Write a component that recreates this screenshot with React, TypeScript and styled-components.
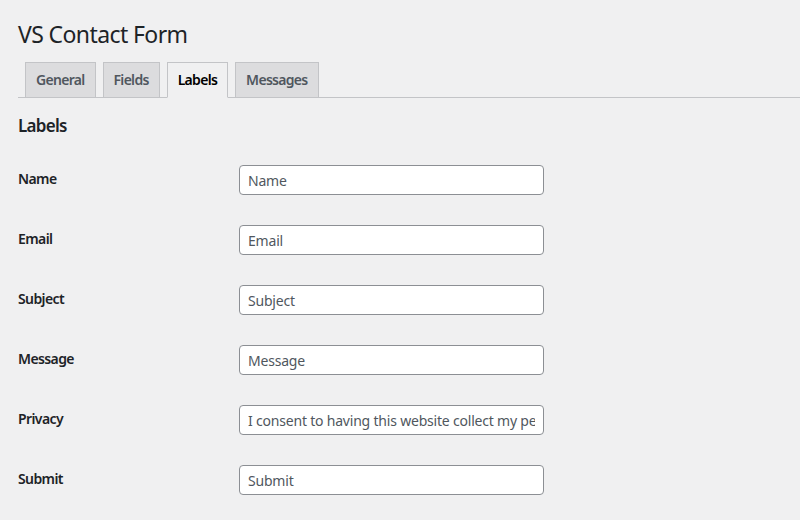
import React from "react";
import styled, { createGlobalStyle } from "styled-components";

const GlobalStyle = createGlobalStyle`
  html, body {
    margin: 0;
    padding: 0;
    background: #f0f0f1;
  }
  body {
    font-family: "Noto Sans", "Open Sans", sans-serif;
    color: #1d2327;
    font-size: 13px;
  }
`;

const Wrap = styled.div`
  padding: 0 0 0 18px;
  min-height: 520px;
  box-sizing: border-box;
`;

const Title = styled.h1`
  margin: 0;
  padding: 19px 0 0 0;
  font-size: 23px;
  font-weight: 400;
  line-height: 30px;
  letter-spacing: -0.6px;
  color: #1d2327;
`;

const Tabs = styled.nav`
  display: flex;
  align-items: flex-end;
  margin-top: 13px;
  border-bottom: 1px solid #c3c4c7;
  padding-left: 7px;
  gap: 7px;
`;

const Tab = styled.a<{ $active?: boolean }>`
  display: block;
  box-sizing: border-box;
  height: 36px;
  margin-bottom: -1px;
  padding: 0 10px;
  line-height: 34px;
  font-size: 14px;
  font-weight: 600;
  letter-spacing: -0.7px;
  text-decoration: none;
  border: 1px solid #c3c4c7;
  border-bottom-color: ${(p) => (p.$active ? "#f0f0f1" : "#c3c4c7")};
  background: ${(p) => (p.$active ? "#f0f0f1" : "#dcdcde")};
  color: ${(p) => (p.$active ? "#000" : "#50575e")};
`;

const Heading = styled.h2`
  margin: 16px 0 0 0;
  font-size: 17px;
  font-weight: 600;
  line-height: 24px;
  letter-spacing: -0.7px;
  color: #1d2327;
`;

const Form = styled.div`
  margin-top: 12px;
  display: flex;
  flex-direction: column;
`;

const Row = styled.div`
  display: flex;
  height: 60px;
`;

const Label = styled.label`
  width: 221px;
  flex: none;
  padding-top: 20px;
  line-height: 18px;
  font-size: 14px;
  font-weight: 600;
  letter-spacing: -0.6px;
  color: #1d2327;
`;

const Input = styled.input`
  margin-top: 15px;
  width: 305px;
  height: 30px;
  box-sizing: border-box;
  border: 1px solid #8c8f94;
  border-radius: 4px;
  background: #fff;
  padding: 0 8px;
  font-family: "Noto Sans", "Open Sans", sans-serif;
  font-size: 14px;
  letter-spacing: -0.2px;
  color: #50575e;
  outline: none;
`;

const tabs = ["General", "Fields", "Labels", "Messages"];
const rows: [string, string][] = [
  ["Name", "Name"],
  ["Email", "Email"],
  ["Subject", "Subject"],
  ["Message", "Message"],
  ["Privacy", "I consent to having this website collect my personal data via this form."],
  ["Submit", "Submit"],
];

export default function App() {
  return (
    <>
      <GlobalStyle />
      <Wrap>
        <Title>VS Contact Form</Title>
        <Tabs>
          {tabs.map((t) => (
            <Tab key={t} href="#" $active={t === "Labels"}>
              {t}
            </Tab>
          ))}
        </Tabs>
        <Heading>Labels</Heading>
        <Form>
          {rows.map(([l, v]) => (
            <Row key={l}>
              <Label>{l}</Label>
              <Input defaultValue={v} readOnly />
            </Row>
          ))}
        </Form>
      </Wrap>
    </>
  );
}
